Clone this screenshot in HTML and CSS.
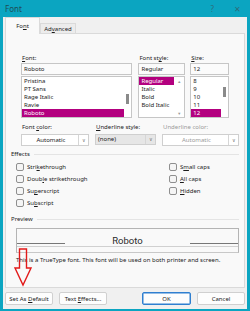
FILE: index.html
```html
<!DOCTYPE html>
<html lang="en">
<head>
  <meta charset="UTF-8">
  <title>Font</title>
  <link rel="stylesheet" href="styles.css">
</head>
<body>

  <div class="window">
    <!-- title bar -->
    <div class="titlebar">
      <span class="title">Font</span>
      <span class="help">?</span>
      <span class="close">&#x2715;</span>
    </div>

    <div class="client">
      <div class="tabs">
        <div class="tab active">Fo<u>n</u>t</div>
        <div class="tab">Ad<u>v</u>anced</div>
      </div>

      <div class="pane">
        <!-- font / style / size -->
        <div class="font-pick">
          <div class="col">
            <div class="label"><u>F</u>ont:</div>
            <div class="field">Roboto</div>
            <div class="list">
              <div class="items">
                <div class="item">Pristina</div>
                <div class="item">PT Sans</div>
                <div class="item">Rage Italic</div>
                <div class="item">Ravie</div>
                <div class="item selected">Roboto</div>
              </div>
              <div class="scroll"><div class="thumb thumb-font"></div></div>
            </div>
          </div>
          <div class="col">
            <div class="label">Font st<u>y</u>le:</div>
            <div class="field">Regular</div>
            <div class="list">
              <div class="items">
                <div class="item selected">Regular</div>
                <div class="item">Italic</div>
                <div class="item">Bold</div>
                <div class="item">Bold Italic</div>
              </div>
              <div class="scroll arrows"><span>&#x25B2;</span><span>&#x25BC;</span></div>
            </div>
          </div>
          <div class="col">
            <div class="label"><u>S</u>ize:</div>
            <div class="field">12</div>
            <div class="list">
              <div class="items">
                <div class="item">8</div>
                <div class="item">9</div>
                <div class="item">10</div>
                <div class="item">11</div>
                <div class="item selected">12</div>
              </div>
              <div class="scroll"><div class="thumb thumb-size"></div></div>
            </div>
          </div>
        </div>

        <!-- colour / underline -->
        <div class="combos">
          <div class="combo-col c-color">
            <div class="label">Font <u>c</u>olor:</div>
            <div class="combo"><span class="value center">Automatic</span><span class="drop">&#x2228;</span></div>
          </div>
          <div class="combo-col c-uline">
            <div class="label"><u>U</u>nderline style:</div>
            <div class="combo grey"><span class="value">(none)</span><span class="drop">&#x2228;</span></div>
          </div>
          <div class="combo-col c-ucolor">
            <div class="label disabled">Underline color:</div>
            <div class="combo"><span class="value center disabled">Automatic</span><span class="drop">&#x2228;</span></div>
          </div>
        </div>

        <!-- effects -->
        <div class="group-head"><span>Effects</span><span class="rule"></span></div>
        <div class="effects">
          <div class="effect-col">
            <label class="check"><span class="box"></span><span>Stri<u>k</u>ethrough</span></label>
            <label class="check"><span class="box"></span><span>Doub<u>l</u>e strikethrough</span></label>
            <label class="check"><span class="box"></span><span>Su<u>p</u>erscript</span></label>
            <label class="check"><span class="box"></span><span>Su<u>b</u>script</span></label>
          </div>
          <div class="effect-col">
            <label class="check"><span class="box"></span><span>S<u>m</u>all caps</span></label>
            <label class="check"><span class="box"></span><span><u>A</u>ll caps</span></label>
            <label class="check"><span class="box"></span><span><u>H</u>idden</span></label>
          </div>
        </div>

        <!-- preview -->
        <div class="group-head"><span>Preview</span><span class="rule"></span></div>
        <div class="preview">
          <span class="base base-left"></span>
          <span class="sample">Roboto</span>
          <span class="base base-right"></span>
        </div>
        <div class="note">This is a TrueType font. This font will be used on both printer and screen.</div>
      </div>

      <div class="buttons">
        <button class="btn">Set As <u>D</u>efault</button>
        <button class="btn">Text <u>E</u>ffects...</button>
        <span class="spacer"></span>
        <button class="btn ok">OK</button>
        <button class="btn">Cancel</button>
      </div>
    </div>

    <!-- red marker arrow -->
    <svg class="marker" width="20" height="40" viewBox="0 0 20 40">
      <path d="M5.5 1 H12.5 V20 H17 L9 37 L1 20 H5.5 Z" fill="none" stroke="#e21a1a" stroke-width="1.4" stroke-linejoin="miter"/>
    </svg>
  </div>

</body>
</html>
```

FILE: styles.css
```css
body {
  margin: 0;
  font-family: "Noto Sans", "Open Sans", sans-serif;
  font-size: 6px;
  color: #1b1b1b;
}

u {
  text-decoration-thickness: 0.5px;
  text-underline-offset: 1px;
}

.window {
  position: relative;
  width: 250px;
  height: 311px;
  box-sizing: border-box;
  background-color: #0ba5c1;
  padding: 0 3px 2px;
  display: flex;
  flex-direction: column;
}

.titlebar {
  height: 17px;
  display: flex;
  align-items: center;
}

.title {
  flex: 1;
  margin-left: 2px;
  font-size: 8px;
  color: #1d4d58;
}

.help {
  font-size: 8px;
  color: #2c6d7b;
  margin-right: 20px;
}

.close {
  font-size: 8px;
  color: #2c6d7b;
  margin-right: 6px;
}

.client {
  flex: 1;
  background-color: #f0f0f0;
  padding: 0 2px;
  display: flex;
  flex-direction: column;
}

.tabs {
  height: 16px;
  display: flex;
  align-items: flex-end;
}

.tab {
  height: 10px;
  width: 36px;
  box-sizing: border-box;
  text-align: center;
  line-height: 10px;
  background-color: #ececec;
  border: 1px solid #dadada;
  border-bottom: none;
}

.tab.active {
  height: 17px;
  width: 35px;
  line-height: 16px;
  background-color: #f9f9f9;
  margin-bottom: -1px;
  position: relative;
  z-index: 1;
}

.pane {
  flex: 1;
  border: 1px solid #dadada;
  background-color: #f9f9f9;
  padding: 20px 5px 0;
}

.font-pick {
  display: flex;
  gap: 6px;
  padding: 0 10px;
}

.col:nth-child(1) { width: 112px; }
.col:nth-child(2) { width: 47px; }
.col:nth-child(3) { width: 39px; margin-left: -1px; }

.label {
  height: 8px;
  line-height: 8px;
  margin-bottom: 1px;
  padding-left: 1px;
}

.disabled {
  color: #9a9a9a;
}

.field {
  height: 12px;
  box-sizing: border-box;
  border: 1px solid #c6c6c6;
  background-color: #fbfbfb;
  padding-left: 2px;
  line-height: 10px;
}

.list {
  height: 42px;
  box-sizing: border-box;
  border: 1px solid #c6c6c6;
  background-color: #fff;
  display: flex;
  margin-top: 1px;
}

.items {
  flex: 1;
}

.item {
  height: 8px;
  line-height: 8px;
  padding-left: 2px;
}

.item.selected {
  background-color: #b3007f;
  color: #fff;
}

.scroll {
  width: 7px;
  position: relative;
}

.thumb {
  position: absolute;
  left: 2px;
  width: 3px;
  background-color: #8a8a8a;
}

.thumb-font { top: 17px; height: 10px; }
.thumb-size { top: 10px; height: 10px; }

.arrows {
  width: 10px;
  display: flex;
  flex-direction: column;
  justify-content: space-between;
  align-items: center;
  font-size: 4px;
  color: #9a9a9a;
  padding: 2px 0 1px;
}

.combos {
  display: flex;
  margin-top: 5px;
  padding-left: 10px;
}

.combo-col {
  display: flex;
  flex-direction: column;
}

.c-color { width: 68px; margin-right: 6px; }
.c-uline { width: 61px; margin-right: 6px; }
.c-ucolor { width: 77px; }

.combos .label {
  margin-bottom: 3px;
}

.combo {
  height: 12px;
  box-sizing: border-box;
  border: 1px solid #cfcfcf;
  background-color: #fff;
  display: flex;
  line-height: 10px;
}

.combo.grey {
  background-color: #e6e6e6;
  height: 11px;
  line-height: 9px;
}

.value {
  flex: 1;
  padding-left: 2px;
}

.value.center {
  text-align: center;
}

.drop {
  width: 9px;
  border-left: 1px solid #d6d6d6;
  text-align: center;
  font-size: 5px;
  color: #777;
}

.group-head {
  display: flex;
  align-items: center;
  height: 8px;
  margin-top: 4px;
  gap: 4px;
}

.rule {
  flex: 1;
  border-top: 1px solid #e4e4e4;
}

.effects {
  display: flex;
  margin-top: 3px;
  padding-left: 5px;
}

.effect-col {
  display: flex;
  flex-direction: column;
}

.effect-col:first-child {
  width: 153px;
}

.check {
  height: 12px;
  display: flex;
  align-items: center;
  gap: 3px;
}

.box {
  width: 8px;
  height: 8px;
  box-sizing: border-box;
  border: 1px solid #8f8f8f;
  border-radius: 2px;
  background-color: #f5f5f5;
}

.effects + .group-head {
  margin-top: 6px;
}

.preview {
  margin: 5px 0 0 5px;
  height: 25px;
  box-sizing: border-box;
  border: 1px solid #b4b4b4;
  display: flex;
  align-items: center;
  border-bottom-color: #c8c8c8;
  position: relative;
}

.preview::after {
  content: "";
  position: absolute;
  left: 0;
  right: 0;
  top: 17px;
  border-top: 1px solid #d0d0d0;
}

.base {
  width: 48px;
  border-top: 1px solid #777;
  margin-top: 6px;
}

.sample {
  flex: 1;
  text-align: center;
  font-family: Roboto, sans-serif;
  font-size: 9.5px;
  color: #2a2a2a;
}

.note {
  margin: 3px 0 0 5px;
  height: 8px;
  line-height: 8px;
  font-size: 6px;
}

.buttons {
  display: flex;
  gap: 6px;
  padding: 4px 0;
}

.spacer {
  flex: 1;
}

.btn {
  height: 13px;
  width: 48px;
  padding: 0;
  font-family: inherit;
  font-size: 6px;
  color: #1b1b1b;
  background-color: #fdfdfd;
  border: 1px solid #d0d0d0;
  border-radius: 2px;
}

.btn.ok {
  width: 49px;
  border: 1px solid #2f7fd0;
  box-shadow: inset 0 0 0 0.5px #2f7fd0;
}

.marker {
  position: absolute;
  left: 14px;
  top: 248px;
}
```
